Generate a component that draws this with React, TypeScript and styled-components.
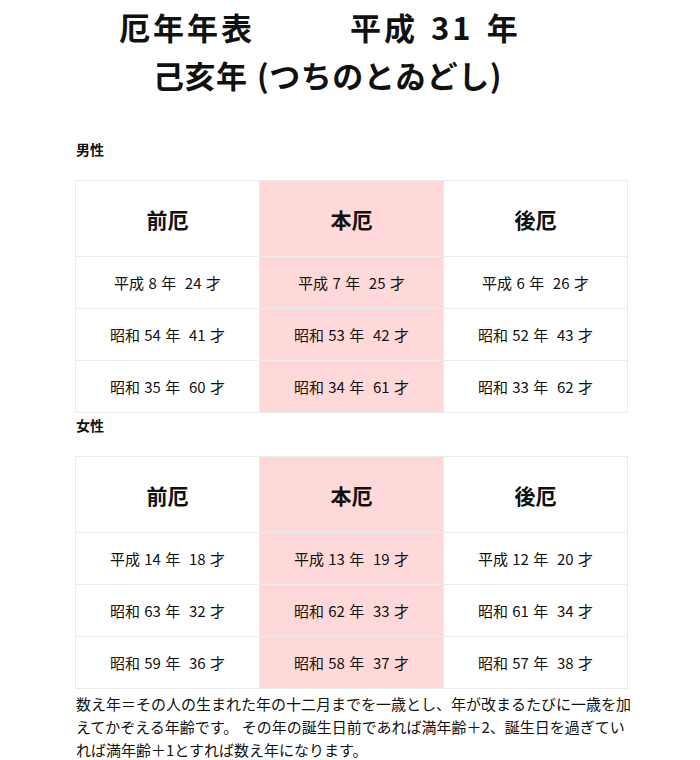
import React from "react";
import styled, { createGlobalStyle } from "styled-components";

const GlobalStyle = createGlobalStyle`
  html, body {
    margin: 0;
    padding: 0;
    background: #ffffff;
  }
  body {
    font-family: "Noto Sans CJK JP", "Noto Sans", sans-serif;
    color: #111111;
  }
`;

const Page = styled.div`
  width: 700px;
  padding: 3px 0 0 0;
  box-sizing: border-box;
`;

const TitleBlock = styled.div`
  margin-bottom: 38px;
`;

const TitleLine = styled.div<{ $indent: number; $spacing: number; $word: number }>`
  padding-left: ${(p) => p.$indent}px;
  font-size: 31px;
  font-weight: 700;
  line-height: 48px;
  letter-spacing: ${(p) => p.$spacing}px;
  word-spacing: ${(p) => p.$word}px;
  white-space: pre;
  color: #111;
`;

const TitleGap = styled.span`
  display: inline-block;
  width: 95px;
`;

const Content = styled.div`
  padding-left: 75px;
  width: 553px;
`;

const Label = styled.div`
  font-size: 14px;
  font-weight: 700;
  line-height: 24px;
  margin-bottom: 19px;
  padding-left: 1px;
`;

const Grid = styled.div`
  display: grid;
  grid-template-columns: repeat(3, 184px);
  border-top: 1px solid #ebebeb;
  border-left: 1px solid #ebebeb;
  width: 553px;
  box-sizing: border-box;
`;

const Cell = styled.div<{ $pink: boolean; $head: boolean }>`
  box-sizing: border-box;
  height: ${(p) => (p.$head ? 76 : 52)}px;
  display: flex;
  align-items: center;
  justify-content: center;
  border-right: 1px solid #ebebeb;
  border-bottom: 1px solid #ebebeb;
  background: ${(p) => (p.$pink ? "#ffd9d9" : "#ffffff")};
  font-size: ${(p) => (p.$head ? 21 : 15)}px;
  font-weight: ${(p) => (p.$head ? 700 : 400)};
  word-spacing: ${(p) => (p.$head ? 0 : 1)}px;
  white-space: pre;
  color: #111;
`;

const Note = styled.p`
  margin: 3px 0 0 1px;
  width: 562px;
  font-size: 15px;
  line-height: 23px;
  color: #111;
`;

type Section = { label: string; rows: string[][] };

const sections: Section[] = [
  {
    label: "男性",
    rows: [
      ["平成 8 年\u00a0 24 才", "平成 7 年\u00a0 25 才", "平成 6 年\u00a0 26 才"],
      ["昭和 54 年\u00a0 41 才", "昭和 53 年\u00a0 42 才", "昭和 52 年\u00a0 43 才"],
      ["昭和 35 年\u00a0 60 才", "昭和 34 年\u00a0 61 才", "昭和 33 年\u00a0 62 才"],
    ],
  },
  {
    label: "女性",
    rows: [
      ["平成 14 年\u00a0 18 才", "平成 13 年\u00a0 19 才", "平成 12 年\u00a0 20 才"],
      ["昭和 63 年\u00a0 32 才", "昭和 62 年\u00a0 33 才", "昭和 61 年\u00a0 34 才"],
      ["昭和 59 年\u00a0 36 才", "昭和 58 年\u00a0 37 才", "昭和 57 年\u00a0 38 才"],
    ],
  },
];

const heads = ["前厄", "本厄", "後厄"];

export default function App() {
  return (
    <Page>
      <GlobalStyle />
      <TitleBlock>
        <TitleLine $indent={119} $spacing={3} $word={3}>
          厄年年表
          <TitleGap />
          平成 31 年
        </TitleLine>
        <TitleLine $indent={153} $spacing={0.5} $word={2}>
          己亥年 (つちのとゐどし)
        </TitleLine>
      </TitleBlock>
      <Content>
        {sections.map((s) => (
          <React.Fragment key={s.label}>
            <Label>{s.label}</Label>
            <Grid>
              {heads.map((h, i) => (
                <Cell key={h} $head $pink={i === 1}>
                  {h}
                </Cell>
              ))}
              {s.rows.map((r) =>
                r.map((c, i) => (
                  <Cell key={c} $head={false} $pink={i === 1}>
                    {c}
                  </Cell>
                ))
              )}
            </Grid>
          </React.Fragment>
        ))}
        <Note>
          数え年＝その人の生まれた年の十二月までを一歳とし、年が改まるたびに一歳を加えてかぞえる年齢です。
          その年の誕生日前であれば満年齢＋2、誕生日を過ぎていれば満年齢＋1とすれば数え年になります。
        </Note>
      </Content>
    </Page>
  );
}
